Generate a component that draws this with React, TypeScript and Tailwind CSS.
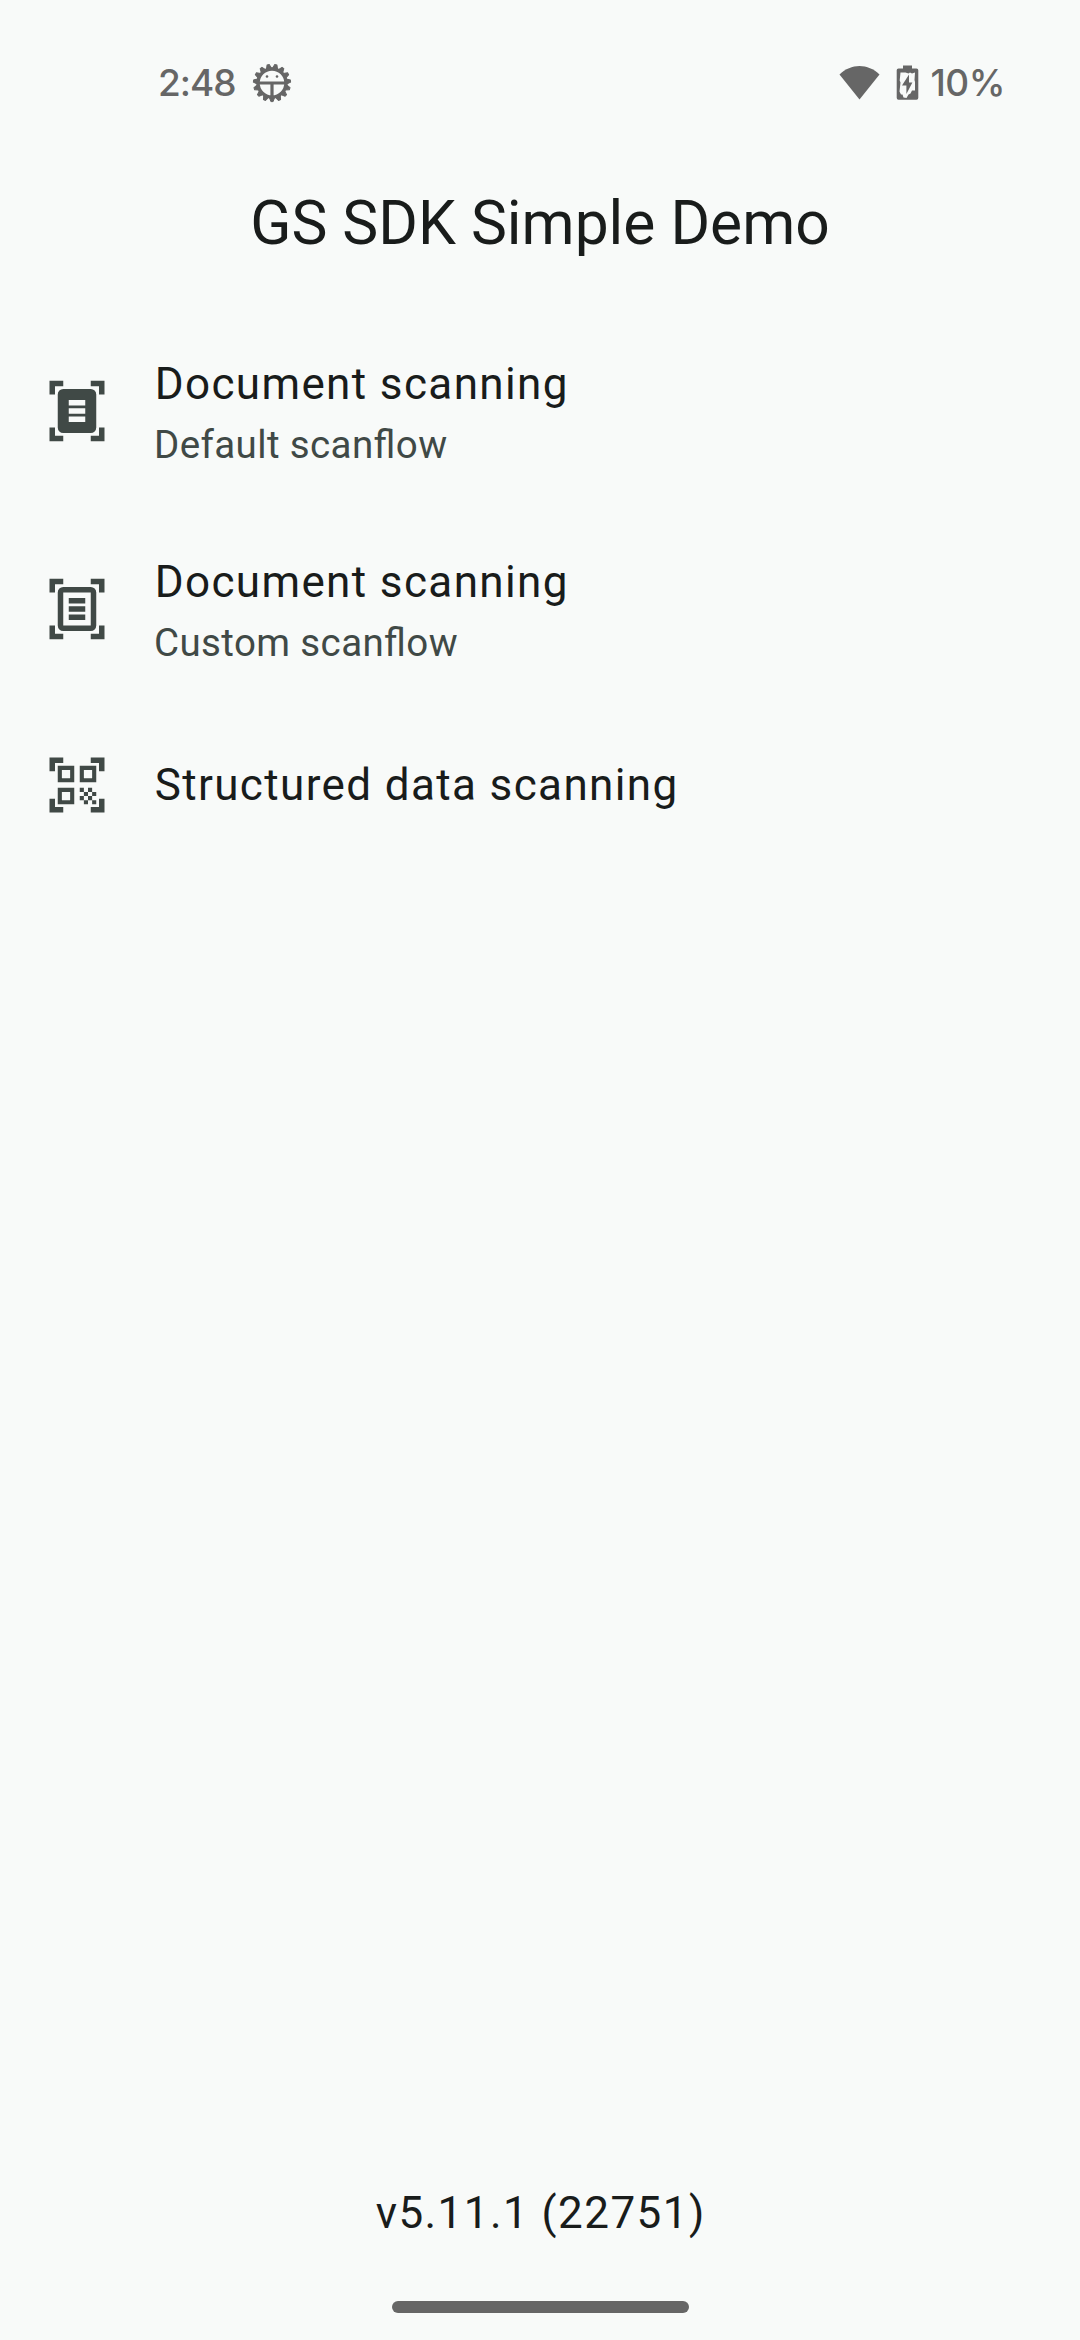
type IconProps = { name: string };

const corners =
  "M22 6h-2V3h-3V1h5v5z M22 23v-5h-2v3h-3v2h5z M2 23h5v-2H4v-3H2v5z M2 1v5h2V3h3V1H2z";

const icons: Record<string, string> = {
  documentFilled: `${corners} M7 4h10a2 2 0 0 1 2 2v12a2 2 0 0 1-2 2H7a2 2 0 0 1-2-2V6a2 2 0 0 1 2-2z M9 8v2h6V8z M9 11v2h6v-2z M9 14v2h6v-2z`,
  documentOutlined: `${corners} M7 4h10a2 2 0 0 1 2 2v12a2 2 0 0 1-2 2H7a2 2 0 0 1-2-2V6a2 2 0 0 1 2-2z M7 6v12h10V6z M9 8v2h6V8z M9 11v2h6v-2z M9 14v2h6v-2z`,
  qrCode:
    "M9.5 6.5v3h-3v-3h3 M11 5H5v6h6V5z M9.5 14.5v3h-3v-3h3 M11 13H5v6h6v-6z M17.5 6.5v3h-3v-3h3 M19 5h-6v6h6V5z M13 13h1.5v1.5H13z M14.5 14.5H16V16h-1.5z M16 13h1.5v1.5H16z M13 16h1.5v1.5H13z M14.5 17.5H16V19h-1.5z M16 16h1.5v1.5H16z M17.5 14.5H19V16h-1.5z M17.5 17.5H19V19h-1.5z M22 7h-2V4h-3V2h5v5z M22 22v-5h-2v3h-3v2h5z M2 22h5v-2H4v-3H2v5z M2 2v5h2V4h3V2H2z",
};

const items = [
  {
    icon: "documentFilled",
    title: "Document scanning",
    description: "Default scanflow",
    className: "h-[198px]",
  },
  {
    icon: "documentOutlined",
    title: "Document scanning",
    description: "Custom scanflow",
    className: "h-[198px]",
  },
  {
    icon: "qrCode",
    title: "Structured data scanning",
    className: "h-[154px] pt-[5px]",
  },
];

const Icon = ({ name }: IconProps) => (
  <svg
    viewBox="0 0 24 24"
    className="size-[66px] shrink-0 fill-[#404946]"
    fillRule="evenodd"
  >
    <path d={icons[name]} />
  </svg>
);

const teeth = Array.from({ length: 15 }, (_, i) => i * 24);

const StatusBar = () => (
  <header className="flex h-[166px] items-start justify-between pt-[60px] pr-[75px] pl-[158px] font-['Inter'] text-[37px] leading-[46px] font-medium text-[#666666]">
    <div className="flex items-center">
      <span className="w-[92px] tracking-[-1px]">2:48</span>
      <svg viewBox="-22 -23 44 46" className="h-[46px] w-[44px]">
        {teeth.map((angle) => (
          <path
            key={angle}
            d="M-2.6 14.5L-1.1 18.6H1.1L2.6 14.5z"
            transform={`rotate(${angle})`}
            fill="currentColor"
            stroke="currentColor"
            strokeLinejoin="round"
          />
        ))}
        <circle r="14" fill="none" stroke="currentColor" strokeWidth="3.4" />
        <path
          d="M-14 0H14M0 0V14"
          fill="none"
          stroke="currentColor"
          strokeWidth="3.2"
        />
        <circle cx="-5" cy="-6.5" r="1.3" fill="currentColor" />
        <circle cx="5" cy="-6.5" r="1.3" fill="currentColor" />
      </svg>
    </div>
    <div className="flex items-center gap-[8px]">
      <svg viewBox="0 0 88 46" className="h-[46px] w-[88px] fill-current">
        <path d="M4.5 14.5C16 3 33 3 44.5 14.5L24.5 39.5z" />
        <path
          fillRule="evenodd"
          d="M68 5.5h9v3h4.500q1.800 0 1.800 1.800v27.500q0 2-1.800 2h-18q-1.800 0-1.800-2V10.300q0-1.800 1.800-1.800H68z M65.500 12.500l-.8 8 .8 2-1 9 1.500 3 1.500 0 1 3 3 .5 2-3.500 2-1 1.500-3 3 0V22l-.500-2 .5-7.500-3 1-2-1-1.500 1-3-1z"
        />
        <path d="M74 14.500L67 25.500h4.400v8.500L77.400 22.500H74z" />
      </svg>
      <span className="tracking-[-0.5px]">10%</span>
    </div>
  </header>
);

const App = () => {
  return (
    <main className="flex h-[2340px] w-[1080px] flex-col bg-[#f8faf9] font-['Roboto',sans-serif] text-[#191c1b]">
      <StatusBar />
      <h1 className="h-[146px] pt-[19px] text-center text-[60.5px] leading-[77px]">
        GS SDK Simple Demo
      </h1>
      <ul className="flex grow flex-col pt-[39px]">
        {items.map((item) => (
          <li
            key={item.icon}
            className={`flex items-start gap-[44px] px-[44px] ${item.className}`}
          >
            <div className={item.description ? "pt-[27px]" : ""}>
              <Icon name={item.icon} />
            </div>
            <div>
              <p className="pl-[0.7px] text-[44px] leading-[66px] tracking-[1.375px]">
                {item.title}
              </p>
              {item.description && (
                <p className="text-[38.5px] leading-[55px] tracking-[0.385px] text-[#404946] [font-feature-settings:'liga']">
                  {item.description}
                </p>
              )}
            </div>
          </li>
        ))}
      </ul>
      <footer className="flex h-[161px] flex-col items-center pt-px">
        <p className="pl-[1.4px] text-[44px] leading-[66px] tracking-[1.45px]">
          v5.11.1 (22751)
        </p>
        <div className="mt-[55px] h-[12px] w-[297px] rounded-full bg-[#666666]" />
      </footer>
    </main>
  );
};

export default App;
